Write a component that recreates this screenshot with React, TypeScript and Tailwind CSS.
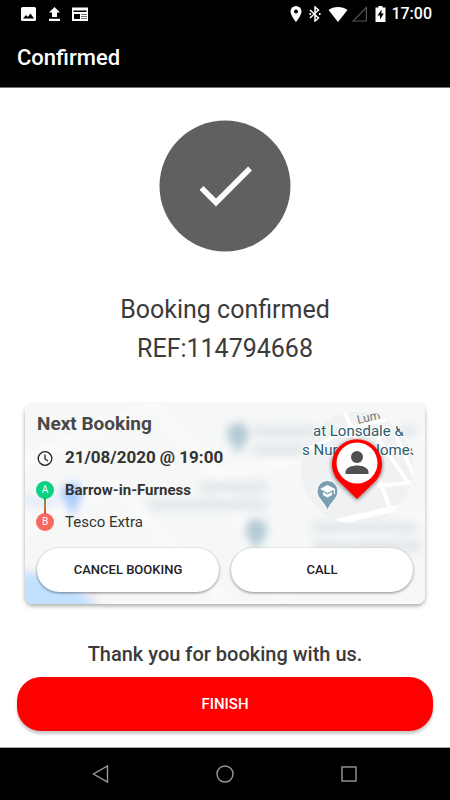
import type { ReactNode } from "react";

const MapBackdrop = () => {
  return (
    <svg className="absolute inset-0 h-full w-full" viewBox="0 0 400 200" preserveAspectRatio="xMaxYMid slice" aria-hidden="true">
      <defs>
        <filter id="soft" x="-20%" y="-20%" width="140%" height="140%">
          <feGaussianBlur stdDeviation="4" />
        </filter>
        <filter id="pinShadow" x="-30%" y="-30%" width="160%" height="160%">
          <feDropShadow dx="0" dy="1" stdDeviation="2" floodColor="#000" floodOpacity="0.6" />
        </filter>
        <clipPath id="lens">
          <circle cx="332" cy="64" r="56" />
        </clipPath>
        <clipPath id="lensLabels">
          <circle cx="332" cy="64" r="58" />
        </clipPath>
      </defs>

      <rect width="400" height="200" fill="#f6f7f7" />
      <g filter="url(#soft)">
        <path d="M-10 60 L120 5 M120 -10 L190 70 L400 30 M-10 130 L90 80 L210 210 M190 70 L260 200 M230 160 L410 110" fill="none" stroke="#fcfcfc" strokeWidth="9" />
        <path d="M-20 166 L15 170 L55 186 L80 210 L-20 210 Z" fill="#c2e1ff" />
        <circle cx="47" cy="90" r="11" fill="#aaccfa" />
        <path d="M38 95 L56 95 L47 112 Z" fill="#aaccfa" />
        <rect x="-4" y="93" width="34" height="8" fill="#dde8fa" />
        <circle cx="213" cy="30" r="11" fill="#b3cbd5" />
        <path d="M204 35 L222 35 L213 50 Z" fill="#b3cbd5" />
        <circle cx="231" cy="126" r="11" fill="#b3cbd5" />
        <path d="M221 131 L241 131 L231 147 Z" fill="#b3cbd5" />
        <circle cx="68" cy="188" r="5" fill="#f6dde0" />
      </g>
      <path
        d="M228 27 H290 M228 46 H280 M376 27 H392 M176 83 H242 M124 101 H242 M288 123 H392 M288 142 H396"
        filter="url(#soft)"
        stroke="#e2e7ea"
        strokeWidth="11"
      />

      <g clipPath="url(#lens)">
        <rect x="270" y="0" width="130" height="130" fill="#eff1f3" />
        <g fill="none" stroke="#fff" strokeWidth="4">
          <path d="M318 4 L328 28 L352 70 L368 112" />
          <path d="M278 48 L326 24 L392 8" />
          <path d="M350 30 L384 80" />
          <path d="M370 30 L392 78" />
          <path d="M352 82 L392 78" />
          <path d="M294 122 L350 109 L392 100" strokeWidth="6" />
        </g>
      </g>
      <g clipPath="url(#lensLabels)" className="font-['Roboto',sans-serif]">
        <text x="333" y="20" transform="rotate(-13 333 20)" className="text-[12px]" fill="#777">Lum</text>
        <g className="text-[15px]" fill="#2d5b6b" stroke="#fff" strokeWidth="2" paintOrder="stroke">
          <text x="288" y="32">at Lonsdale &amp;</text>
          <text x="277" y="51">s Nursing Homes</text>
        </g>
      </g>
      <path d="M302.500 107 C300 98 292 95 292 87 A10.500 10.500 0 0 1 313 87 C313 95 305 98 302.500 107 Z" fill="#7a9fb1" stroke="#fff" strokeWidth="1" />
      <path d="M302.500 81 L295 85 L302.500 89 L308.700 85.700 L308.700 90 L310 90 L310 85 Z M298 88 L298 91 L302.500 93.500 L307 91 L307 88 L302.500 90.500 Z" fill="#fff" />

      <path d="M332 95 L313 76.500 A25 25 0 1 1 351 76.500 Z" fill="#f00" filter="url(#pinShadow)" />
      <circle cx="332" cy="59" r="20.500" fill="#fff" />
      <circle cx="332" cy="53" r="6" fill="#505050" />
      <path d="M320.500 70 V68 C320.500 63.500 327.500 61.500 332 61.500 C336.500 61.500 343.500 63.500 343.500 68 V70 Z" fill="#505050" />
    </svg>
  );
};

const StatusBar = () => {
  return (
    <div className="flex h-7 items-center justify-between pl-5 pr-[18px] text-white">
      <div className="flex items-center gap-[10px]">
        <svg className="size-4" viewBox="0 0 16 16" fill="currentColor">
          <path fillRule="evenodd" d="M2.500 1 H14.500 Q16 1 16 2.500 V13.500 Q16 15 14.500 15 H2.500 Q1 15 1 13.500 V2.500 Q1 1 2.500 1 Z M3 12.500 H14 L10.500 7.500 L7.800 11 L6 9 Z" />
        </svg>
        <svg className="size-4" viewBox="0 0 16 16" fill="currentColor">
          <path d="M8.500 1 L14 6.500 H11 V11 H6 V6.500 H3 Z M3 12.700 H14 V15 H3 Z" />
        </svg>
        <svg className="size-4" viewBox="0 0 16 16">
          <path d="M0 1 L1 2 L2 1 L3 2 L4 1 L5 2 L6 1 L7 2 L8 1 L9 2 L10 1 L11 2 L12 1 L13 2 L14 1 L15 2 L16 1 V15 H0 Z" fill="#fff" />
          <path d="M1.500 4.500 H14.500 V6 H1.500 Z M2 8 H8 V13 H2 Z" fill="#000" />
          <path d="M9 8.500 H15 M9 10.500 H15 M9 12.500 H15" stroke="#777" />
        </svg>
      </div>
      <div className="flex items-center">
        <svg className="mr-[7px] h-4 w-3" viewBox="0 0 12 16" fill="currentColor">
          <path fillRule="evenodd" d="M6 0 A5.500 5.500 0 0 1 11.500 5.500 C11.500 9.500 6 16 6 16 C6 16 0.500 9.500 0.500 5.500 A5.500 5.500 0 0 1 6 0 Z M6 3.600 A2 2 0 1 0 6 7.600 A2 2 0 1 0 6 3.600 Z" />
        </svg>
        <svg className="mr-[7px] h-4 w-3" viewBox="0 0 12 16" fill="none" stroke="currentColor" strokeWidth="1.500">
          <path d="M1 4 L9.500 12 L6 15 V1 L9.500 4 L1 12" />
          <path d="M0.500 8 H2 M10 8 H11.500" strokeWidth="2" />
        </svg>
        <svg className="mr-1 h-4 w-5" viewBox="0 0 20 16" fill="currentColor">
          <path d="M10 16 L0.500 4 C5.500 0 14.500 0 19.500 4 Z" />
        </svg>
        <svg className="mr-[7px] size-4" viewBox="0 0 16 16" fill="none" stroke="#555" strokeWidth="1.200">
          <path d="M14.400 1.500 V15 H1 Z" />
        </svg>
        <svg className="mr-1 h-4 w-3" viewBox="0 0 12 16">
          <path d="M3.500 0 H7.500 V1.500 H10.500 V16 H0.500 V1.500 H3.500 Z" fill="#fff" />
          <path d="M6.500 3.500 L2.500 9.500 H5 V13.500 L8.800 7.500 H6.500 Z" fill="#000" />
        </svg>
        <span className="text-base font-medium leading-none">17:00</span>
      </div>
    </div>
  );
};

const Stop = ({ letter, color, children }: { letter: string; color: string; children: ReactNode }) => {
  return (
    <li className="flex h-8 items-center gap-3">
      <span className={`flex size-4 items-center justify-center rounded-full text-[10px] leading-none text-white ring-1 ${color}`}>{letter}</span>
      {children}
    </li>
  );
};

const BookingCard = () => {
  return (
    <section className="relative mx-2 mt-9 overflow-hidden rounded-lg px-3 pb-3 pt-2 shadow-[0_2px_4px_rgba(0,0,0,0.35)]">
      <MapBackdrop />
      <div className="relative">
        <h2 className="text-[19px] font-bold leading-6 text-[#484848]">Next Booking</h2>
        <div className="mt-2 flex h-7 items-center gap-3">
          <svg className="size-4" viewBox="0 0 16 16" fill="none" stroke="#222" strokeWidth="1.300">
            <circle cx="8" cy="8.500" r="6.800" />
            <path d="M8 4.500 V9 L11 11" />
          </svg>
          <time className="text-[17px] font-bold text-[#333]">21/08/2020 @ 19:00</time>
        </div>
        <ul className="relative mt-0.5 text-[15px] text-[#333]">
          <li className="absolute left-[7px] top-6 h-4 w-0.5 bg-linear-to-b from-green-600 to-red-500" aria-hidden="true"></li>
          <Stop letter="A" color="bg-[#0bd183] ring-[#0bd183]">
            <strong className="font-bold">Barrow-in-Furness</strong>
          </Stop>
          <Stop letter="B" color="bg-[#f8685e] ring-[#f8685e]">
            <span>Tesco Extra</span>
          </Stop>
        </ul>
        <div className="mt-2.5 grid grid-cols-2 gap-3">
          <button className="h-11 rounded-full bg-white text-[13px] font-medium text-[#222] shadow-[0_1px_3px_rgba(0,0,0,0.45)]">CANCEL BOOKING</button>
          <button className="h-11 rounded-full bg-white text-[13px] font-medium text-[#222] shadow-[0_1px_3px_rgba(0,0,0,0.45)]">CALL</button>
        </div>
      </div>
    </section>
  );
};

const NavBar = () => {
  return (
    <nav className="flex h-[53px] items-center justify-center gap-[104px] border-t border-[#a3aaa6] bg-black">
      <button aria-label="Back">
        <svg className="size-5" viewBox="0 0 20 20" fill="none" stroke="#999" strokeWidth="1.400">
          <path d="M16.500 2 V18 L2.500 10 Z" />
        </svg>
      </button>
      <button aria-label="Home">
        <svg className="size-5" viewBox="0 0 20 20" fill="none" stroke="#999" strokeWidth="1.400">
          <circle cx="10" cy="10" r="8" />
        </svg>
      </button>
      <button aria-label="Recent apps">
        <svg className="size-5" viewBox="0 0 20 20" fill="none" stroke="#999" strokeWidth="1.400">
          <rect x="3" y="3" width="14" height="14" />
        </svg>
      </button>
    </nav>
  );
};

export default function App() {
  return (
    <div className="flex min-h-screen flex-col bg-white font-['Roboto',sans-serif]">
      <header className="border-b border-neutral-500 bg-black">
        <StatusBar />
        <h1 className="px-[17px] pb-[11px] pt-3 text-[22px] font-medium leading-9 text-white">Confirmed</h1>
      </header>

      <main className="flex flex-1 flex-col px-[17px] pt-8">
        <svg className="mx-auto size-[132px]" viewBox="0 0 132 132" role="img" aria-label="Done">
          <circle cx="66" cy="66" r="65.500" fill="#606060" />
          <path d="M42.500 68 L57 82.500 L91 48.500" fill="none" stroke="#fff" strokeWidth="5.500" />
        </svg>
        <p className="mt-[38px] text-center text-[25px] leading-[39px] text-[#3b3b3b]">
          Booking confirmed
          <br />
          REF:114794668
        </p>
        <BookingCard />
        <p className="mt-9 text-center text-xl font-medium leading-7 text-[#3b3b3b]">Thank you for booking with us.</p>
        <button className="mt-[9px] h-[54px] w-full rounded-3xl bg-[#f00] text-[15px] font-medium text-white shadow-[0_3px_3px_rgba(0,0,0,0.22)]">FINISH</button>
      </main>

      <NavBar />
    </div>
  );
}
